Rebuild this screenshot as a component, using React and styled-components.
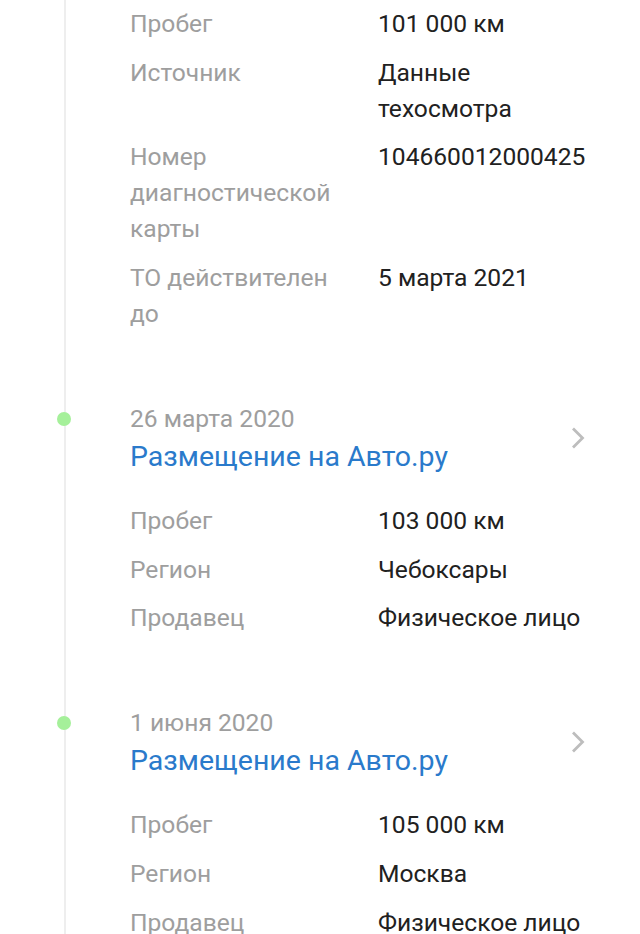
import React from 'react'
import styled, { createGlobalStyle } from 'styled-components'

const GlobalStyle = createGlobalStyle`
  html, body {
    margin: 0;
    padding: 0;
    background: #ffffff;
    font-family: Roboto, 'Noto Sans', sans-serif;
  }
`

const inspection = [
  ['Пробег', '101 000 км'],
  ['Источник', 'Данные техосмотра'],
  ['Номер диагностической карты', '104660012000425'],
  ['ТО действителен до', '5 марта 2021'],
]

const events = [
  {
    date: '26 марта 2020',
    title: 'Размещение на Авто.ру',
    rows: [
      ['Пробег', '103 000 км'],
      ['Регион', 'Чебоксары'],
      ['Продавец', 'Физическое лицо'],
    ],
  },
  {
    date: '1 июня 2020',
    title: 'Размещение на Авто.ру',
    rows: [
      ['Пробег', '105 000 км'],
      ['Регион', 'Москва'],
      ['Продавец', 'Физическое лицо'],
    ],
  },
]

const Chevron = () => (
  <ChevronIcon width="16" height="24" viewBox="0 0 16 24" fill="none">
    <path d="M3 2.5l9.5 9.5-9.5 9.5" stroke="#bdbdbd" strokeWidth="2.8" />
  </ChevronIcon>
)

const Details = ({ rows }) => (
  <DetailList>
    {rows.map(([label, value]) => (
      <DetailRow key={label}>
        <Label>{label}</Label>
        <Value>{value}</Value>
      </DetailRow>
    ))}
  </DetailList>
)

const App = () => {
  return (
    <>
      <GlobalStyle />
      <Timeline>
        <Details rows={inspection} />
        {events.map((ev, i) => (
          <Event key={i}>
            <Dot />
            <EventHead>
              <HeadText>
                <EventDate>{ev.date}</EventDate>
                <EventTitle>{ev.title}</EventTitle>
              </HeadText>
              <Chevron />
            </EventHead>
            <Details rows={ev.rows} />
          </Event>
        ))}
      </Timeline>
    </>
  )
}

//STYLED COMPONENTS
const Timeline = styled.div`
  margin-left: 64px;
  border-left: 2px solid #eeeeee;
  padding: 6px 40px 0 64px;
  min-height: 934px;
  box-sizing: border-box;
`

const DetailList = styled.div`
  display: flex;
  flex-direction: column;
  gap: 12.7px;
`

const DetailRow = styled.div`
  display: grid;
  grid-template-columns: 248px 1fr;
  font-size: 24.6px;
  line-height: 36px;
`

const Label = styled.div`
  color: #9e9e9e;
  padding-right: 24px;
`

const Value = styled.div`
  color: #212121;
`

const Event = styled.div`
  position: relative;
  margin-top: 69px;
`

const Dot = styled.span`
  position: absolute;
  left: -73px;
  top: 11px;
  width: 14px;
  height: 14px;
  border-radius: 50%;
  background: #a5f09a;
`

const EventHead = styled.div`
  display: flex;
  align-items: center;
  justify-content: space-between;
  margin-bottom: 26px;
`

const HeadText = styled.div`
  display: flex;
  flex-direction: column;
`

const ChevronIcon = styled.svg`
  margin-right: 14px;
  margin-top: -2px;
  flex-shrink: 0;
`

const EventDate = styled.div`
  font-size: 24.6px;
  line-height: 36px;
  color: #9e9e9e;
`

const EventTitle = styled.div`
  font-size: 28.5px;
  line-height: 40px;
  color: #2a7acb;
`

export default App
